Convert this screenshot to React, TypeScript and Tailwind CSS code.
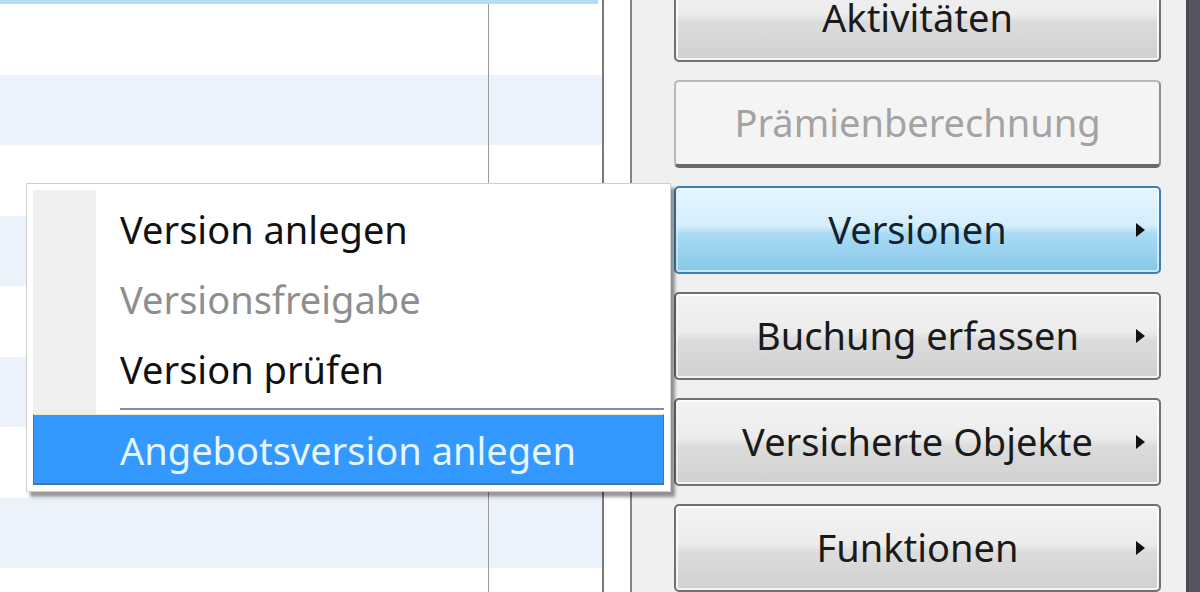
import React from 'react';

type BtnState = 'normal' | 'disabled' | 'hover';

const rows = Array.from({ length: 9 }, (_, i) => i);

const Arrow: React.FC = () => (
    <svg className="absolute right-[14px] top-1/2 -translate-y-1/2" width="9" height="14" viewBox="0 0 9 14">
        <path d="M0 0 L9 7 L0 14 Z" fill="#111" />
    </svg>
);

const PanelButton: React.FC<{ label: string; state?: BtnState; arrow?: boolean }> = ({ label, state = 'normal', arrow }) => {
    let cls = 'border-2 border-[#707070] bg-[linear-gradient(#f3f3f3_0%,#ececec_45%,#dcdcdc_55%,#d0d0d0_100%)] text-[#1a1a1a] shadow-[inset_0_0_0_2px_rgba(255,255,255,0.75)]';
    if (state === 'disabled') {
        cls = 'border-2 border-[#b9b9b9] border-r-[#8f8f8f] border-b-[4px] border-b-[#6a6a6a] bg-[#f4f4f4] text-[#a3a3a3]';
    }
    if (state === 'hover') {
        cls = 'border-2 border-[#3c7fb1] bg-[linear-gradient(#e6f5fd_0%,#d4eefb_45%,#a9dbf5_55%,#86c6e8_100%)] text-[#14222e] shadow-[inset_0_0_0_2px_rgba(255,255,255,0.55)]';
    }
    return (
        <div className={`relative h-[88px] w-[487px] shrink-0 rounded-[5px] flex items-center justify-center text-[38px] ${cls}`}>
            <span className="leading-[1.2]">{label}</span>
            {arrow && <Arrow />}
        </div>
    );
};

const ContextMenu: React.FC = () => (
    <div className="absolute left-[26px] top-[183px] w-[645px] h-[309px] bg-white border border-[#cfcfcf] p-[6px] flex flex-col shadow-[4px_5px_3px_rgba(0,0,0,0.4)]">
        <div className="flex h-[226px]">
            <div className="w-[63px] bg-[#efefef]" />
            <div className="flex-1 flex flex-col pt-[4px] pl-[24px]">
                <div className="h-[70px] flex items-center text-[#111]">Version anlegen</div>
                <div className="h-[70px] flex items-center text-[#8e8e8e]">Versionsfreigabe</div>
                <div className="h-[70px] flex items-center text-[#111]">Version prüfen</div>
                <div className="mt-[4px] h-[2px] bg-[#7e8ea6]" />
            </div>
        </div>
        <div className="h-[71px] flex items-center pl-[86px] pt-[3px] bg-[#3399ff] border border-[#4a74a0] border-b-2 border-t-[#ece8cc] text-[#e6f6ff]">
            Angebotsversion anlegen
        </div>
    </div>
);

export default function App() {
    return (
        <div className="relative w-[1200px] h-[592px] overflow-hidden flex bg-white text-[38px] font-['Noto_Sans','Liberation_Sans',sans-serif]">
            {/* grid */}
            <div className="w-[602px] shrink-0 flex flex-col">
                <div className="h-[4px] w-[598px] shrink-0 bg-[#b2dff3]" />
                {rows.map((i) => (
                    <div key={i} className={`h-[70.5px] shrink-0 flex ${i % 2 === 1 ? 'bg-[#ebf2fc]' : 'bg-white'}`}>
                        <div className="w-[489px] border-r border-[#9a9a9a]" />
                        <div className="flex-1" />
                    </div>
                ))}
            </div>
            <div className="w-[2px] shrink-0 bg-[#7a7a7a]" />
            <div className="w-[26px] shrink-0 bg-white" />
            <div className="w-[2px] shrink-0 bg-[#858585]" />
            {/* button panel */}
            <div className="w-[554px] shrink-0 bg-[#f0f0f0] pl-[42px] flex flex-col gap-[18px] -mt-[26px]">
                <PanelButton label="Aktivitäten" />
                <PanelButton label="Prämienberechnung" state="disabled" />
                <PanelButton label="Versionen" state="hover" arrow />
                <PanelButton label="Buchung erfassen" arrow />
                <PanelButton label="Versicherte Objekte" arrow />
                <PanelButton label="Funktionen" arrow />
            </div>
            <div className="w-[3px] shrink-0 bg-[#4a4a4a]" />
            <div className="flex-1 bg-[#575360]" />
            <ContextMenu />
        </div>
    );
}
